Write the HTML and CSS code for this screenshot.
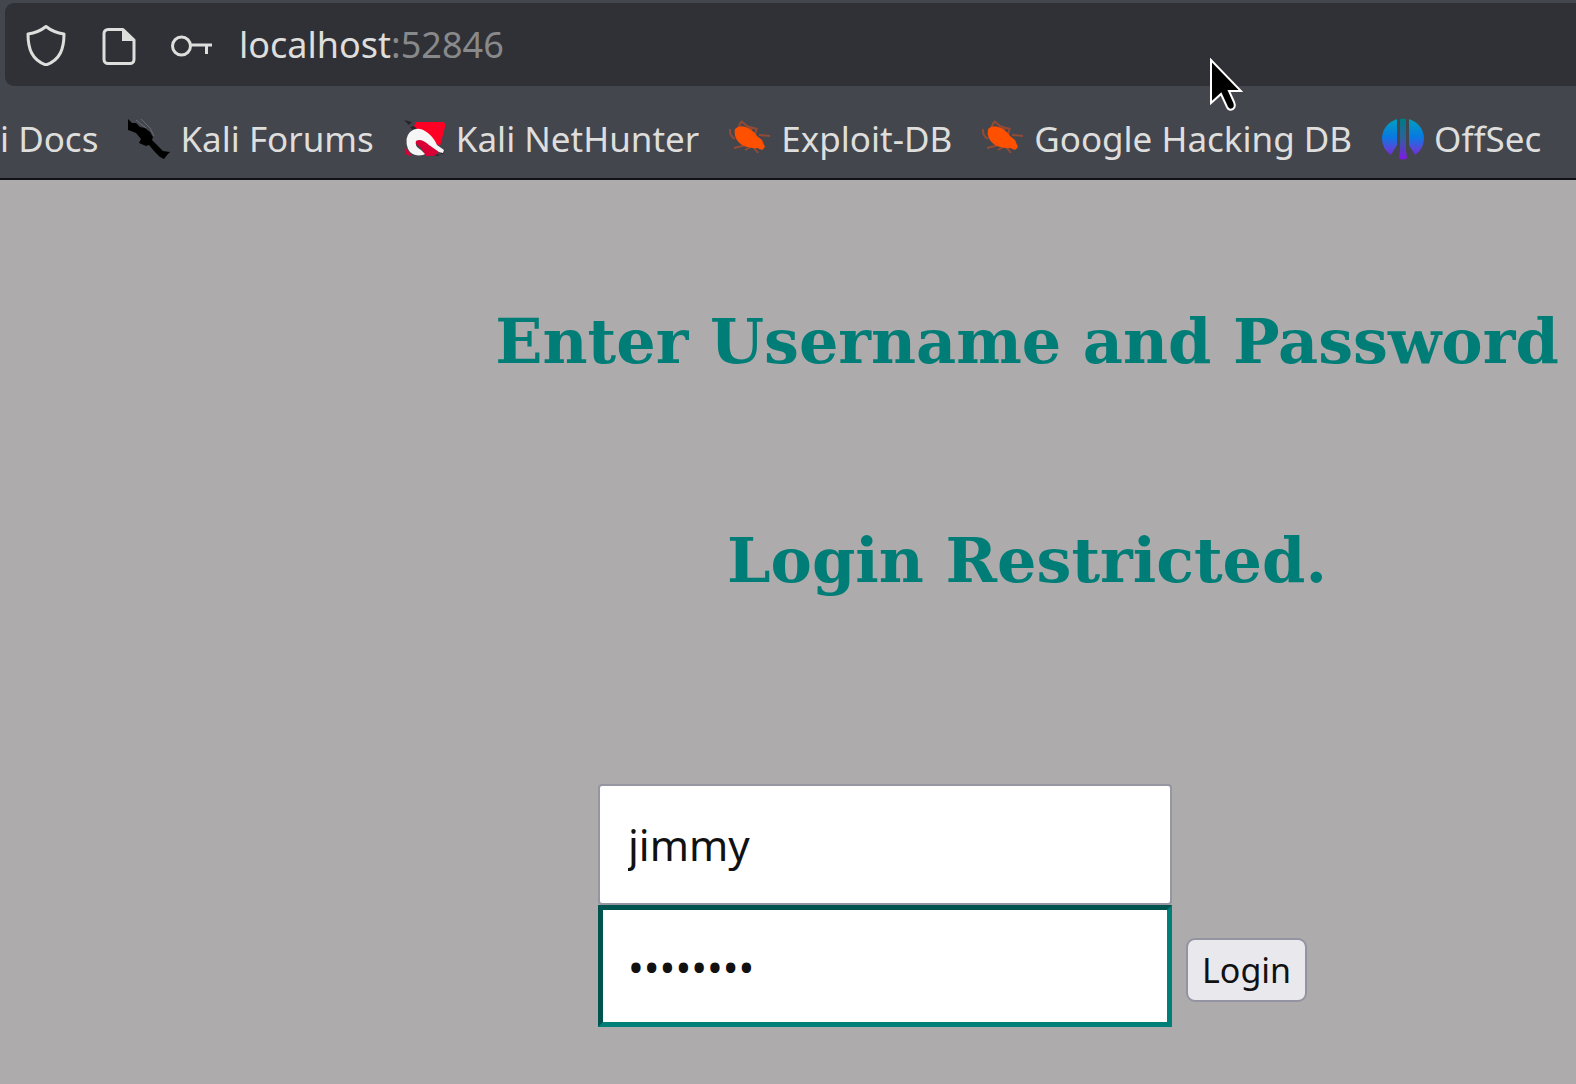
FILE: index.html
```html
<!DOCTYPE html>
<html lang="en">
<head>
<meta charset="utf-8">
<meta name="viewport" content="width=device-width, initial-scale=1">
<title>Login</title>
<link rel="stylesheet" href="styles.css">
</head>
<body>
<header class="chrome">
  <div class="urlbar">
    <svg class="tool-icon" viewBox="0 0 42 42" aria-hidden="true"><path d="M21 2.500 C16 6.500 10 9 3 10 C3 25 7 36 21 41 C35 36 39 25 39 10 C32 9 26 6.500 21 2.500Z"/></svg>
    <svg class="tool-icon" viewBox="0 0 42 42" aria-hidden="true"><path d="M10 5.500H25L36 16V35.500a4 4 0 0 1-4 4H10a4 4 0 0 1-4-4V9.500a4 4 0 0 1 4-4Z"/><path class="solid" d="M24 5.500V17H36Z"/></svg>
    <svg class="tool-icon" viewBox="0 0 42 42" aria-hidden="true"><circle cx="10.500" cy="22" r="9"/><path d="M19.500 21H41M35.500 21V30"/></svg>
    <div class="address"><span>localhost</span><span class="port">:52846</span></div>
  </div>
  <nav class="bookmarks" aria-label="Bookmarks">
    <a href="#docs">i Docs</a>
    <a href="#forums">
      <svg class="favicon" viewBox="0 0 42 42" aria-hidden="true"><path d="M0 1L4 5L8 5L12 9L17 10L22 14L25 19L24 22L29 27L35 33L42 34L39 37L36 41L32 39L26 33L21 27L18 28L11 25L13 21L8 15L3 13L0 12Z"/><path class="faint" d="M8 2L18 10M13 1L22 10L26 18"/></svg>
      <span>Kali Forums</span></a>
    <a href="#nethunter">
      <svg class="favicon" viewBox="0 0 42 42" aria-hidden="true"><path d="M0 2L8 4L5 7ZM6 9L14 7L10 13ZM28 37L39 36L41 32L34 38Z" fill="#25262b"/><path d="M12 4H39Q42 5 41 9L36 28L25 22L14 12L10 8Z" fill="#ff0024"/><path d="M1 29L8 38L3 37Q0 35 1 29ZM10 22Q14 18 19 20L28 27L35 34L30 38H22L17 30L11 25Z" fill="#d80035"/><path d="M19 37Q8 39 4 31Q0 20 6 14Q14 7 24 15Q30 20 33 27L40 32L39 35L35 34L25 27Q17 20 12 23Q10 28 17 32L21 36Z" fill="#f6f6f6"/></svg>
      <span>Kali NetHunter</span></a>
    <a href="#exploit-db">
      <svg class="favicon" viewBox="0 0 42 42" aria-hidden="true"><g id="bug"><path class="legs" d="M12 3L23 12M17 8L28 11M8 12L12 4M1 11Q0 17 6 21M5 30L17 27M16 32L23 28M25 30L29 35M30 17L41 18M25 19L28 10"/><path fill="#ff5000" d="M6 11Q11 6 19 10Q26 14 28 18L33 22L36 29L33 32L28 30Q20 31 13 27Q4 21 6 11Z"/></g></svg>
      <span>Exploit-DB</span></a>
    <a href="#ghdb">
      <svg class="favicon" viewBox="0 0 42 42" aria-hidden="true"><use href="#bug"/></svg>
      <span>Google Hacking DB</span></a>
    <a href="#offsec">
      <svg class="favicon" viewBox="0 0 42 42" aria-hidden="true"><defs><linearGradient id="sec" gradientUnits="userSpaceOnUse" x1="0" y1="1" x2="0" y2="41"><stop offset="0" stop-color="#00a0bd"/><stop offset=".45" stop-color="#0879e2"/><stop offset=".75" stop-color="#5847da"/><stop offset="1" stop-color="#7618d8"/></linearGradient><linearGradient id="stem" gradientUnits="userSpaceOnUse" x1="0" y1="1" x2="0" y2="41"><stop offset="0" stop-color="#007b87"/><stop offset=".5" stop-color="#30609c"/><stop offset="1" stop-color="#8018e8"/></linearGradient></defs><path fill="url(#sec)" d="M15 1V27L9 37Q0 31 0 20Q1 6 15 1ZM27 1Q41 6 42 20Q42 31 33 37L27 27Z"/><path fill="url(#stem)" d="M18 1Q21 0 24 1V33L25 40Q21 43 17 40L18 33Z"/></svg>
      <span>OffSec</span></a>
  </nav>
</header>
<main class="page">
  <h2>Enter Username and Password</h2>
  <h2>Login Restricted.</h2>
  <form class="login" action="#" method="post">
    <input class="field" type="text" name="username" value="jimmy" aria-label="Username">
    <div class="row">
      <input class="field active" type="password" name="password" value="password" aria-label="Password">
      <button type="submit">Login</button>
    </div>
  </form>
</main>
<svg class="pointer" viewBox="0 0 34 56" aria-hidden="true"><path d="M2 2V45L12 36L18 49Q20 53 24 51Q27 49 25 44L20 33H32Z"/></svg>
</body>
</html>
```
FILE: styles.css
```css
* {
  box-sizing: border-box;
}

body {
  margin: 0;
  min-height: 100vh;
  background: #adabab;
  overflow-x: hidden;
}

.chrome {
  padding-top: 3px;
  background: #44464e;
  border-bottom: 2px solid #101116;
  color: #dededc;
  font-family: "Noto Sans", sans-serif;
}

.urlbar {
  display: flex;
  align-items: center;
  gap: 31px;
  height: 83px;
  margin-left: 5px;
  padding-left: 20px;
  background: #303136;
  border-radius: 9px 0 0 9px;
}

.tool-icon {
  flex: none;
  width: 42px;
  height: 42px;
  fill: none;
  stroke: #dededc;
  stroke-width: 3;
  stroke-linejoin: round;
}

.tool-icon .solid {
  fill: #dededc;
  stroke: none;
}

.address {
  margin-left: -5px;
  font-size: 36px;
  line-height: 48px;
}

.port {
  color: #88898b;
}

.bookmarks {
  display: flex;
  align-items: center;
  gap: 30px;
  height: 92px;
  padding-top: 14px;
  overflow: hidden;
}

.bookmarks a {
  display: flex;
  flex: none;
  align-items: center;
  gap: 10px;
  color: inherit;
  font-size: 35px;
  line-height: 46px;
  text-decoration: none;
  white-space: nowrap;
}

.favicon {
  width: 42px;
  height: 42px;
}

.faint {
  fill: none;
  stroke: #6b6c72;
}

.legs {
  fill: none;
  stroke: #924a34;
  stroke-width: 2;
}

.page {
  padding: 124px 0 56px 478px;
}

h2 {
  margin: 0 0 144px;
  color: #007d77;
  font: bold 62px/75px "DejaVu Serif", serif;
  text-align: center;
  white-space: nowrap;
}

.login {
  display: flex;
  flex-direction: column;
  align-items: flex-start;
  margin: 186px 0 0 120px;
}

.row {
  display: flex;
  align-items: baseline;
  gap: 14px;
}

.field {
  width: 574px;
  height: 121px;
  padding: 0 28px;
  border: 2px solid #9695a2;
  border-radius: 4px;
  background: #fff;
  color: #111;
  font: 42px/58px "Noto Sans", sans-serif;
  outline: none;
}

.active {
  height: 122px;
  padding: 0 25px;
  border: 5px solid;
  border-color: #00534f #007f79 #007f79 #00534f;
  border-radius: 0;
}

button {
  height: 64px;
  padding: 0 14px;
  border: 2px solid #9493a2;
  border-radius: 9px;
  background: #e9e9ed;
  color: #111;
  font: 34px/48px "Noto Sans", sans-serif;
}

.pointer {
  position: absolute;
  top: 58px;
  left: 1209px;
  width: 34px;
  height: 56px;
  fill: #000;
  stroke: #fff;
  stroke-width: 2;
}
```
